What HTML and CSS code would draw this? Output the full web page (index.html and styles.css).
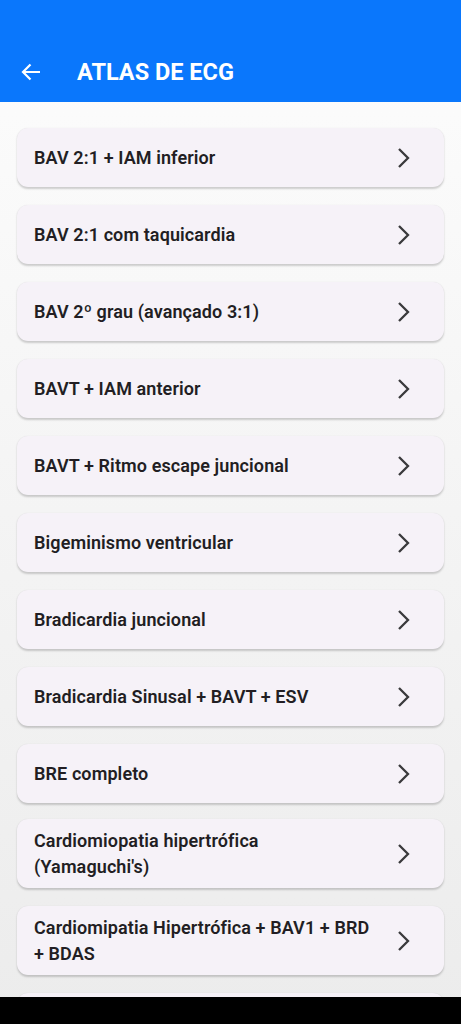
FILE: index.html
```html
<!DOCTYPE html>
<html lang="pt">
<head>
<meta charset="utf-8">
<link rel="stylesheet" href="styles.css">
</head>
<body>
<div class="screen">
  <header class="appbar">
    <svg class="back" width="20" height="18" viewBox="0 0 20 18"><path d="M19 9H2M9.5 1.5L2 9l7.5 7.5" fill="none" stroke="#fff" stroke-width="2.2"/></svg>
    <h1 class="title">ATLAS DE ECG</h1>
  </header>
  <main class="list">
    <div class="card"><span class="label">BAV 2:1 + IAM inferior</span><svg class="chev" viewBox="0 0 14 22"><path d="M2 2l9 9-9 9" fill="none" stroke="#3a3a3c" stroke-width="2.3"/></svg></div>
    <div class="card"><span class="label">BAV 2:1 com taquicardia</span><svg class="chev" viewBox="0 0 14 22"><path d="M2 2l9 9-9 9" fill="none" stroke="#3a3a3c" stroke-width="2.3"/></svg></div>
    <div class="card"><span class="label">BAV 2º grau (avançado 3:1)</span><svg class="chev" viewBox="0 0 14 22"><path d="M2 2l9 9-9 9" fill="none" stroke="#3a3a3c" stroke-width="2.3"/></svg></div>
    <div class="card"><span class="label">BAVT + IAM anterior</span><svg class="chev" viewBox="0 0 14 22"><path d="M2 2l9 9-9 9" fill="none" stroke="#3a3a3c" stroke-width="2.3"/></svg></div>
    <div class="card"><span class="label">BAVT + Ritmo escape juncional</span><svg class="chev" viewBox="0 0 14 22"><path d="M2 2l9 9-9 9" fill="none" stroke="#3a3a3c" stroke-width="2.3"/></svg></div>
    <div class="card"><span class="label">Bigeminismo ventricular</span><svg class="chev" viewBox="0 0 14 22"><path d="M2 2l9 9-9 9" fill="none" stroke="#3a3a3c" stroke-width="2.3"/></svg></div>
    <div class="card"><span class="label">Bradicardia juncional</span><svg class="chev" viewBox="0 0 14 22"><path d="M2 2l9 9-9 9" fill="none" stroke="#3a3a3c" stroke-width="2.3"/></svg></div>
    <div class="card"><span class="label">Bradicardia Sinusal + BAVT + ESV</span><svg class="chev" viewBox="0 0 14 22"><path d="M2 2l9 9-9 9" fill="none" stroke="#3a3a3c" stroke-width="2.3"/></svg></div>
    <div class="card"><span class="label">BRE completo</span><svg class="chev" viewBox="0 0 14 22"><path d="M2 2l9 9-9 9" fill="none" stroke="#3a3a3c" stroke-width="2.3"/></svg></div>
    <div class="card tall first-tall"><span class="label">Cardiomiopatia hipertrófica<br>(Yamaguchi's)</span><svg class="chev" viewBox="0 0 14 22"><path d="M2 2l9 9-9 9" fill="none" stroke="#3a3a3c" stroke-width="2.3"/></svg></div>
    <div class="card tall"><span class="label">Cardiomipatia Hipertrófica + BAV1 + BRD<br>+ BDAS</span><svg class="chev" viewBox="0 0 14 22"><path d="M2 2l9 9-9 9" fill="none" stroke="#3a3a3c" stroke-width="2.3"/></svg></div>
    <div class="card"></div>
  </main>
  <div class="navbar"></div>
</div>
</body>
</html>
```
FILE: styles.css
```css
* { box-sizing: border-box; }
html, body { margin: 0; padding: 0; }
body { font-family: Roboto, "Noto Sans", sans-serif; background: #000; }
.screen {
  width: 461px; height: 1024px; position: relative; overflow: hidden;
  background: linear-gradient(to bottom, #fdfdfd 0%, #f4f4f4 50%, #ececec 100%);
}
.appbar {
  height: 102px; background: #0a77fc;
  display: flex; align-items: flex-end; padding: 0 0 18px 21px;
}
.back { width: 20px; height: 18px; margin-bottom: 3px; }
.title {
  margin: 0 0 0 36px; color: #fff; font-size: 23.5px; font-weight: 700;
  line-height: 24px; letter-spacing: 0;
}
.list {
  display: flex; flex-direction: column; gap: 18px;
  padding: 26px 17px 0 17px;
}
.card {
  min-height: 59px; background: #f6f2f8; border-radius: 11px;
  box-shadow: 0 1.5px 2px rgba(0,0,0,0.18), 0 0 1px rgba(0,0,0,0.06);
  display: flex; align-items: center; justify-content: space-between;
  padding: 8.5px 33px 8.5px 17px;
}
.card.tall { padding-top: 9px; padding-bottom: 9px; }
.card.first-tall { margin-top: -2px; }
.label {
  color: #221e23; font-size: 18px; font-weight: 600; line-height: 25.5px;
  letter-spacing: 0.1px;
}
.chev { width: 14px; height: 22px; flex: none; }
.navbar {
  position: absolute; left: 0; right: 0; bottom: 0; height: 27px; background: #000;
}
```
